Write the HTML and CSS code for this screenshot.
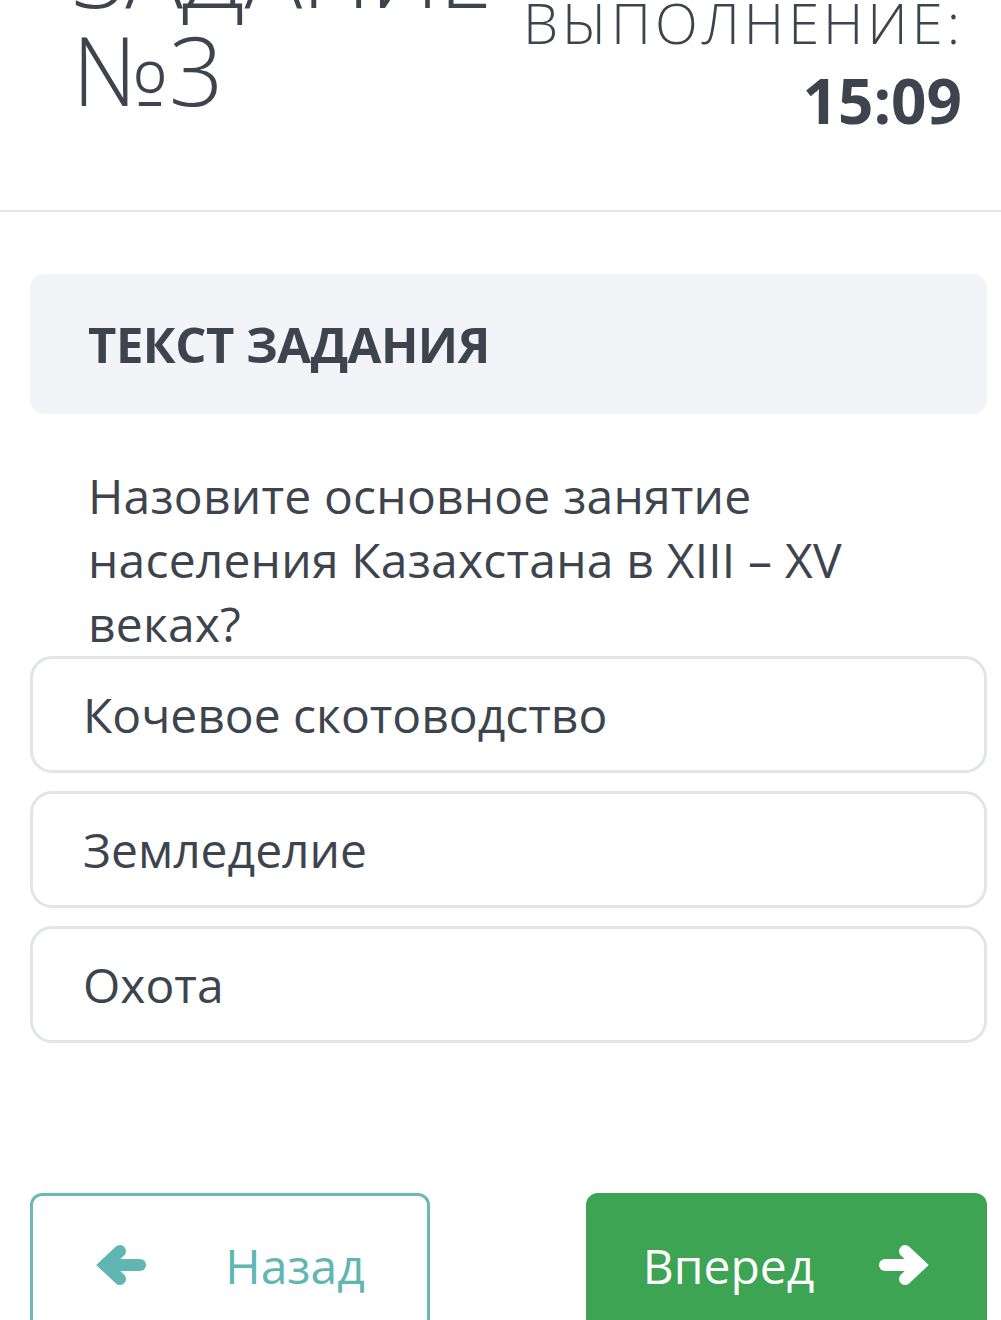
FILE: index.html
```html
<!DOCTYPE html>
<html lang="ru">
<head>
<meta charset="utf-8">
<title>Задание №3</title>
<link rel="stylesheet" href="styles.css">
</head>
<body>
<header class="top">
  <h1 class="task-title">ЗАДАНИЕ<br>№3</h1>
  <div class="timer">
    <div class="timer-label">ВРЕМЯ НА<br>ВЫПОЛНЕНИЕ:</div>
    <div class="timer-value">15:09</div>
  </div>
</header>
<main class="content">
  <div class="section-head">ТЕКСТ ЗАДАНИЯ</div>
  <p class="question">Назовите основное занятие населения Казахстана в XIII – XV веках?</p>
  <div class="options">
    <div class="option">Кочевое скотоводство</div>
    <div class="option">Земледелие</div>
    <div class="option">Охота</div>
  </div>
  <div class="nav">
    <button class="btn btn-back">
      <svg class="arrow arrow-back" viewBox="0 0 52 44" width="52" height="44"><polyline points="25,8 10,22 25,36" /><line x1="10" y1="22" x2="45" y2="22" /></svg>
      <span>Назад</span>
    </button>
    <button class="btn btn-next">
      <span>Вперед</span>
      <svg class="arrow arrow-next" viewBox="0 0 52 44" width="52" height="44"><polyline points="27,8 42,22 27,36" /><line x1="42" y1="22" x2="7" y2="22" /></svg>
    </button>
  </div>
</main>
</body>
</html>
```
FILE: styles.css
```css
html, body {
  margin: 0;
  padding: 0;
  background: #ffffff;
}
body {
  font-family: "Open Sans", "Noto Sans", sans-serif;
  color: #3e444e;
  overflow: hidden;
}
.top {
  display: flex;
  justify-content: space-between;
  align-items: flex-start;
  margin-top: -78px;
  padding: 0 41px 70px 72px;
  border-bottom: 2px solid #e6e6e6;
}
.task-title {
  margin: 0;
  font-size: 96px;
  font-weight: 300;
  line-height: 98px;
  letter-spacing: -0.5px;
}
.timer {
  text-align: right;
  padding-top: 4px;
}
.timer-label {
  font-size: 56px;
  font-weight: 300;
  line-height: 64px;
  letter-spacing: 4px;
  margin-right: -4px;
}
.timer-value {
  margin-top: 6px;
  font-size: 62px;
  font-weight: 700;
  line-height: 80px;
  margin-right: -2px;
}
.content {
  margin: 0 14px 0 30px;
}
.section-head {
  margin-top: 62px;
  height: 140px;
  display: flex;
  align-items: center;
  padding-left: 58px;
  background: #f2f4f7;
  border-radius: 14px;
  font-size: 49px;
  font-weight: 700;
  letter-spacing: -0.5px;
}
.question {
  margin: 50px 0 0;
  padding: 0 80px 0 58px;
  font-size: 48px;
  line-height: 64px;
  letter-spacing: 0.2px;
}
.options {
  display: flex;
  flex-direction: column;
  gap: 18px;
}
.option {
  box-sizing: border-box;
  height: 117px;
  display: flex;
  align-items: center;
  padding-left: 50px;
  border: 3px solid #e1e4e8;
  border-radius: 22px;
  font-size: 48px;
}
.nav {
  margin-top: 150px;
  display: flex;
  justify-content: space-between;
}
.btn {
  box-sizing: border-box;
  height: 144px;
  display: flex;
  align-items: center;
  justify-content: center;
  border-radius: 12px;
  font-family: inherit;
  font-size: 48px;
  padding: 0;
}
.btn-back {
  width: 400px;
  background: #ffffff;
  border: 3px solid #6ab9b8;
  color: #5fb6b3;
  gap: 78px;
}
.btn-next {
  width: 401px;
  background: #3ca453;
  border: none;
  color: #ffffff;
  gap: 64px;
}
.arrow {
  fill: none;
  stroke-width: 12;
  stroke-linecap: round;
  stroke-linejoin: miter;
}
.arrow-back {
  stroke: #5fb6b3;
}
.arrow-next {
  stroke: #ffffff;
}
```
